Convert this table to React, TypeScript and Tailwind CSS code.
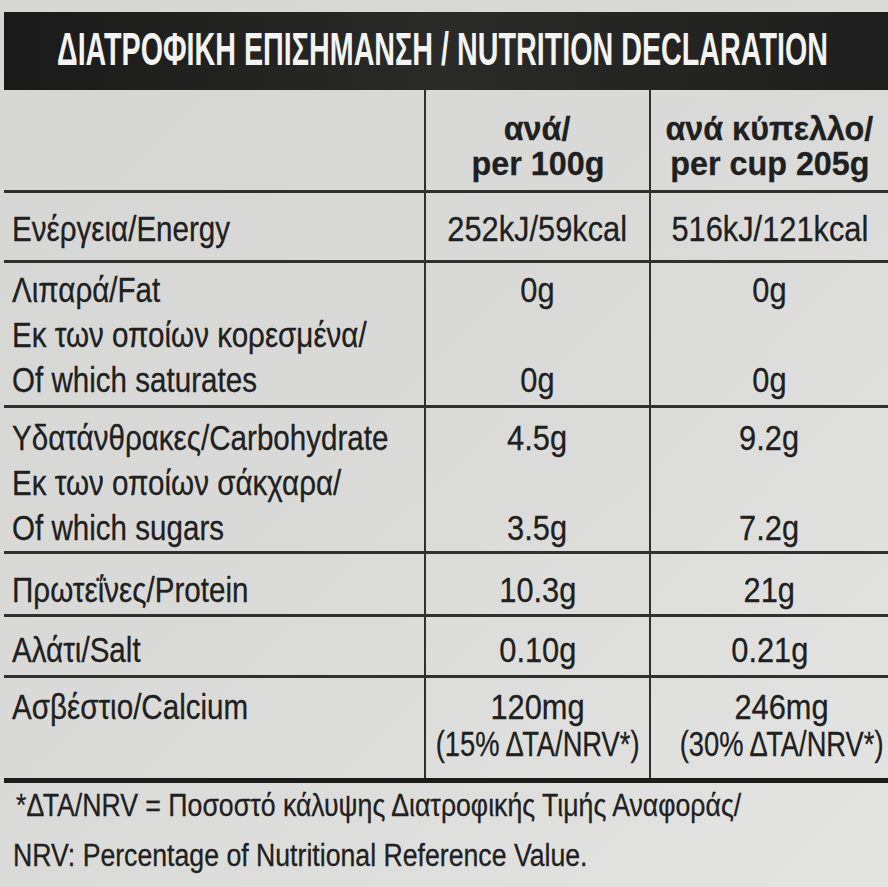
// Nutrition label (photo) recreation
type Row = { lines: string[]; a: string[]; b: string[]; h: string; pt: string; lh: string };

const rows: Row[] = [
  { lines: ['Ενέργεια/Energy'], a: ['252kJ/59kcal'], b: ['516kJ/121kcal'], h: 'h-[70px]', pt: 'pt-[13px]', lh: 'h-[45px] leading-[45px]' },
  { lines: ['Λιπαρά/Fat', 'Εκ των οποίων κορεσμένα/', 'Of which saturates'], a: ['0g', '', '0g'], b: ['0g', '', '0g'], h: 'h-[145px]', pt: 'pt-[4px]', lh: 'h-[45px] leading-[45px]' },
  { lines: ['Υδατάνθρακες/Carbohydrate', 'Εκ των οποίων σάκχαρα/', 'Of which sugars'], a: ['4.5g', '', '3.5g'], b: ['9.2g', '', '7.2g'], h: 'h-[146px]', pt: 'pt-[7px]', lh: 'h-[45px] leading-[45px]' },
  { lines: ['Πρωτεΐνες/Protein'], a: ['10.3g'], b: ['21g'], h: 'h-[63px]', pt: 'pt-[13px]', lh: 'h-[45px] leading-[45px]' },
  { lines: ['Αλάτι/Salt'], a: ['0.10g'], b: ['0.21g'], h: 'h-[61px]', pt: 'pt-[10px]', lh: 'h-[45px] leading-[45px]' },
  { lines: ['Ασβέστιο/Calcium', ''], a: ['120mg', '(15% ΔΤΑ/NRV*)'], b: ['246mg', '(30% ΔΤΑ/NRV*)'], h: 'h-[105px]', pt: 'pt-[10px]', lh: 'h-[37px] leading-[37px]' },
];

const font = { fontFamily: '"Liberation Sans", Arial, sans-serif' };

// the printed face is a narrow grotesque, so squeeze Liberation Sans sideways
function Label({ children, s = 'scale-x-[0.845]' }: { children: React.ReactNode; s?: string }) {
  return <span className={`inline-block whitespace-nowrap origin-left ${s}`}>{children}</span>;
}

function Value({ text }: { text: string }) {
  const nrv = text.startsWith('(');
  return (
    <span className={`inline-block whitespace-nowrap origin-center ${nrv ? 'scale-x-[0.78]' : 'scale-x-[0.88]'}`}>{text}</span>
  );
}

function Cell({ items, center, lh }: { items: string[]; center?: boolean; lh: string }) {
  return (
    <div className={center ? '' : 'pl-[8px]'}>
      {items.map((t, i) => (
        <div key={i} className={`${lh} whitespace-nowrap ${center ? 'flex justify-center' : ''}`}>
          {!t ? '\u00a0' : center ? <Value text={t} /> : <Label>{t}</Label>}
        </div>
      ))}
    </div>
  );
}

function HeadCell({ top, bottom }: { top: string; bottom: string }) {
  return (
    <div className="pt-[21px] font-bold text-[34px] leading-[35px]">
      <div className="flex justify-center"><span className="inline-block whitespace-nowrap scale-x-[0.95] origin-center">{top}</span></div>
      <div className="flex justify-center"><span className="inline-block whitespace-nowrap scale-x-[0.95] origin-center">{bottom}</span></div>
    </div>
  );
}

export default function App() {
  return (
    <div
      className="w-[888px] h-[887px] overflow-hidden bg-gradient-to-br from-[#d6d7d4] via-[#dadbd8] to-[#e4e5e2] text-[#202020] pt-[12px] pl-[4px] [-webkit-text-stroke:0.3px_#202020]"
      style={font}
    >
      <div className="h-[78px] bg-gradient-to-r from-[#1a1a1a] via-[#2a2a28] to-[#1e1e1e] flex items-center pl-[53px] pb-[4px] [-webkit-text-stroke:0px]">
        <span className="text-[#f3f3f1] text-[46px] font-bold">
          <span className="inline-block whitespace-nowrap scale-x-[0.624] origin-left">ΔΙΑΤΡΟΦΙΚΗ ΕΠΙΣΗΜΑΝΣΗ / NUTRITION DECLARATION</span>
        </span>
      </div>

      <div className="grid grid-cols-[422px_225px_1fr] h-[103px] border-b-[3px] border-[#303030]">
        <div className="border-r-[2px] border-[#303030]" />
        <div className="border-r-[2px] border-[#303030]">
          <HeadCell top="ανά/" bottom="per 100g" />
        </div>
        <HeadCell top="ανά κύπελλο/" bottom="per cup 205g" />
      </div>

      {rows.map((r, i) => (
        <div
          key={i}
          className={`grid grid-cols-[422px_225px_1fr] text-[35px] ${r.h} ${i === rows.length - 1 ? 'border-b-[5px] border-[#1c1c1c]' : 'border-b-[3px] border-[#303030]'}`}
        >
          <div className={`border-r-[2px] border-[#303030] ${r.pt}`}><Cell items={r.lines} lh={r.lh} /></div>
          <div className={`border-r-[2px] border-[#303030] ${r.pt}`}><Cell items={r.a} lh={r.lh} center /></div>
          <div className={r.pt}><Cell items={r.b} lh={r.lh} center /></div>
        </div>
      ))}

      <div className="pl-[12px] -mt-[2px] text-[31px] leading-[50px]">
        <div><Label s="scale-x-[0.86]">*ΔΤΑ/NRV = Ποσοστό κάλυψης Διατροφικής Τιμής Αναφοράς/</Label></div>
        <div className="-ml-[3px]"><Label s="scale-x-[0.86]">NRV: Percentage of Nutritional Reference Value.</Label></div>
      </div>
    </div>
  );
}
